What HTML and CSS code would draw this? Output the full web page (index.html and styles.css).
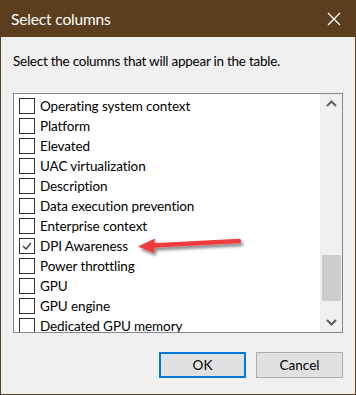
FILE: index.html
```html
<!DOCTYPE html>
<html>
<head>
<meta charset="utf-8">
<link rel="stylesheet" href="styles.css">
</head>
<body>
<div class="window">
  <div class="titlebar">
    <span class="title">Select columns</span>
    <svg class="close" width="14" height="14" viewBox="0 0 14 14"><path d="M1 1L13 13M13 1L1 13" stroke="#fff" stroke-width="1.3" fill="none"/></svg>
  </div>
  <div class="content">
    <p class="intro">Select the columns that will appear in the table.</p>
    <div class="listbox">
      <div class="items">
        <div class="row"><span class="cb"></span><span>Operating system context</span></div>
        <div class="row"><span class="cb"></span><span>Platform</span></div>
        <div class="row"><span class="cb"></span><span>Elevated</span></div>
        <div class="row"><span class="cb"></span><span>UAC virtualization</span></div>
        <div class="row"><span class="cb"></span><span>Description</span></div>
        <div class="row"><span class="cb"></span><span>Data execution prevention</span></div>
        <div class="row"><span class="cb"></span><span>Enterprise context</span></div>
        <div class="row"><span class="cb checked"><svg width="14" height="14" viewBox="0 0 14 14"><path d="M3 7L6 10L11 4" stroke="#333" stroke-width="1.2" fill="none"/></svg></span><span>DPI Awareness</span></div>
        <div class="row"><span class="cb"></span><span>Power throttling</span></div>
        <div class="row"><span class="cb"></span><span>GPU</span></div>
        <div class="row"><span class="cb"></span><span>GPU engine</span></div>
        <div class="row"><span class="cb"></span><span>Dedicated GPU memory</span></div>
      </div>
      <div class="scrollbar">
        <svg class="arrow" width="21" height="20" viewBox="0 0 21 20"><path d="M6 12L10.5 7.5L15 12" stroke="#606060" stroke-width="2" fill="none"/></svg>
        <div class="track"><div class="thumb"></div></div>
        <svg class="arrow" width="21" height="20" viewBox="0 0 21 20"><path d="M6 8L10.5 12.5L15 8" stroke="#606060" stroke-width="2" fill="none"/></svg>
      </div>
    </div>
    <div class="buttons">
      <button class="btn default">OK</button>
      <button class="btn">Cancel</button>
    </div>
  </div>
  <svg class="pointer" width="120" height="30" viewBox="0 0 120 30">
    <defs>
      <filter id="sh" x="-20%" y="-50%" width="140%" height="200%">
        <feDropShadow dx="2" dy="3" stdDeviation="1.6" flood-color="#000" flood-opacity="0.45"/>
      </filter>
    </defs>
    <g filter="url(#sh)">
      <path d="M16 14.5L103 10" stroke="#ee3a3f" stroke-width="4.5" stroke-linecap="round" fill="none"/>
      <path d="M2 15.5L19 7.5L18 22Z" fill="#ee3a3f"/>
    </g>
  </svg>
</div>
</body>
</html>
```
FILE: styles.css
```css
html, body {
  margin: 0;
  padding: 0;
}
body {
  font-family: Lato, "Open Sans", sans-serif;
  background: #f0f0f0;
}
.window {
  position: relative;
  width: 356px;
  height: 395px;
  box-sizing: border-box;
  border: 1px solid #5b3e1e;
  border-top: 0;
  background: #f0f0f0;
  display: flex;
  flex-direction: column;
}
.titlebar {
  height: 37px;
  flex: none;
  background: #5b3e1e;
  display: flex;
  align-items: center;
  justify-content: space-between;
  padding: 0 14px 0 10px;
  color: #fff;
}
.title {
  font-size: 15.5px;
  letter-spacing: -0.15px;
}
.close {
  display: block;
}
.content {
  flex: 1;
  display: flex;
  flex-direction: column;
  padding: 0 12px 0 12px;
}
.intro {
  margin: 14px 0 0 0;
  font-size: 13.5px;
  line-height: 20px;
  color: #000;
  letter-spacing: -0.25px;
}
.listbox {
  margin-top: 22px;
  height: 240px;
  box-sizing: border-box;
  border: 1px solid #828790;
  background: #fff;
  display: flex;
  overflow: hidden;
}
.items {
  flex: 1;
  padding-top: 2px;
  overflow: hidden;
}
.row {
  height: 20px;
  display: flex;
  align-items: center;
  padding-left: 5px;
  font-size: 13.5px;
  letter-spacing: -0.1px;
  color: #000;
  white-space: nowrap;
}
.cb {
  width: 16px;
  height: 16px;
  box-sizing: border-box;
  border: 1px solid #333;
  background: #fff;
  margin-right: 5px;
  display: flex;
  align-items: center;
  justify-content: center;
  flex: none;
}
.scrollbar {
  width: 21px;
  flex: none;
  background: #f0f0f0;
  border-left: 1px solid #e8eef8;
  display: flex;
  flex-direction: column;
}
.arrow {
  display: block;
  flex: none;
}
.track {
  flex: 1;
  display: flex;
  flex-direction: column;
  justify-content: flex-end;
  padding: 0 1px 11px 1px;
}
.thumb {
  height: 46px;
  background: #cdcdcd;
}
.buttons {
  display: flex;
  justify-content: flex-end;
  gap: 10px;
  margin-top: 19px;
}
.btn {
  width: 87px;
  height: 26px;
  box-sizing: border-box;
  border: 1px solid #adadad;
  background: #e1e1e1;
  font-family: Lato, "Open Sans", sans-serif;
  font-size: 13.5px;
  color: #000;
  padding: 0;
}
.btn.default {
  border: 2px solid #0078d7;
}
.pointer {
  position: absolute;
  left: 135px;
  top: 231px;
  overflow: visible;
}
```
